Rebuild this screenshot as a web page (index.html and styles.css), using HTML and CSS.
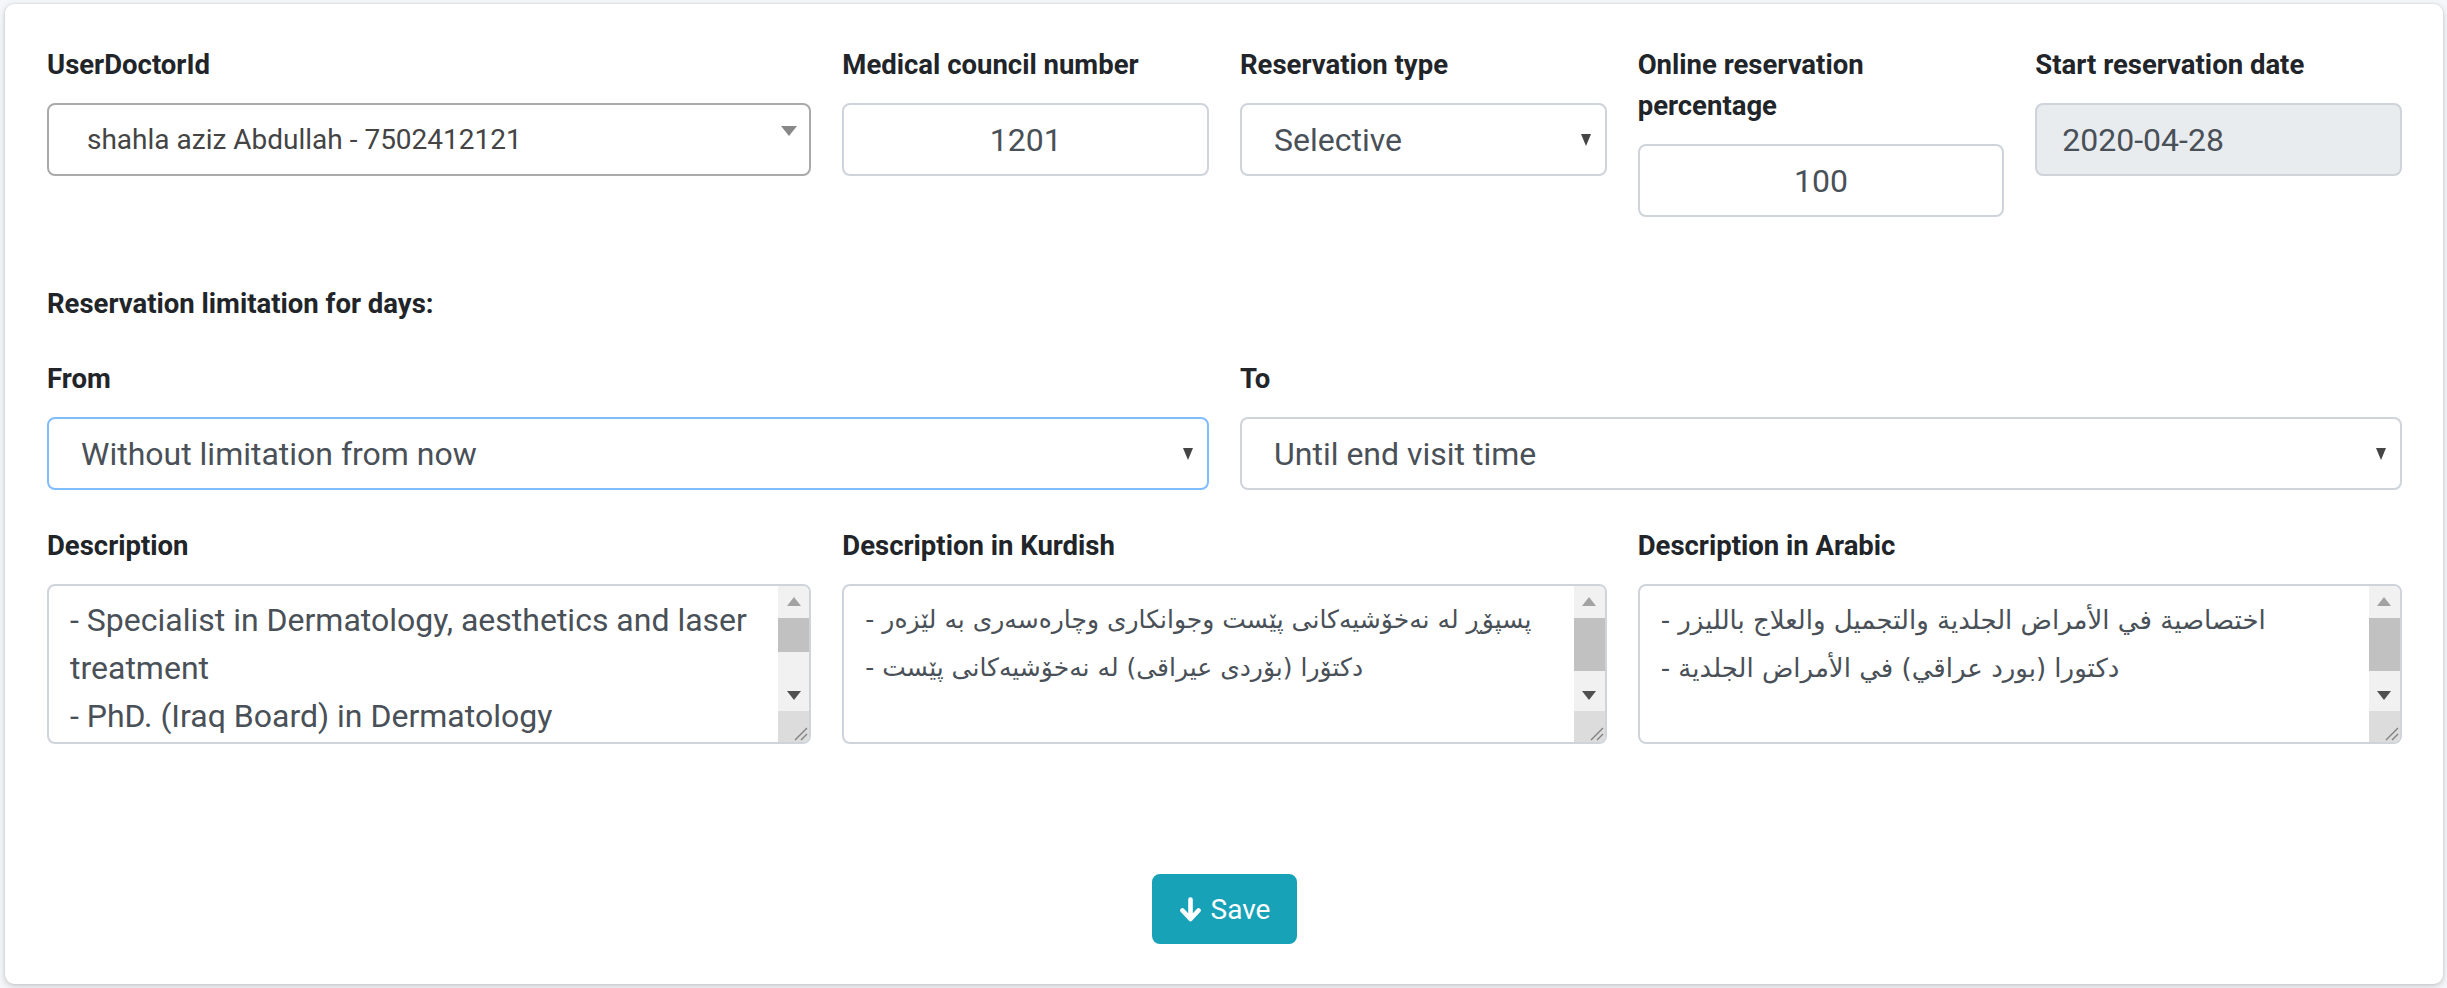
FILE: index.html
```html
<!DOCTYPE html>
<html lang="en">
<head>
<meta charset="utf-8">
<title>Doctor reservation settings</title>
<link rel="stylesheet" href="styles.css">
</head>
<body>
<div class="page">
  <div class="card">
    <div class="grid row-top">
      <div class="field span4">
        <label>UserDoctorId</label>
        <div class="select2">
          <span class="s2-text">shahla aziz Abdullah - 7502412121</span>
          <span class="s2-arrow"></span>
        </div>
      </div>
      <div class="field span2">
        <label>Medical council number</label>
        <input class="control center" type="text" value="1201">
      </div>
      <div class="field span2">
        <label>Reservation type</label>
        <select class="control select"><option>Selective</option></select>
      </div>
      <div class="field span2">
        <label class="label-narrow">Online reservation percentage</label>
        <input class="control center" type="text" value="100">
      </div>
      <div class="field span2">
        <label>Start reservation date</label>
        <input class="control readonly" type="text" value="2020-04-28" readonly>
      </div>
    </div>

    <div class="section-label">Reservation limitation for days:</div>

    <div class="grid row-mid">
      <div class="field span6">
        <label>From</label>
        <select class="control select focus"><option>Without limitation from now</option></select>
      </div>
      <div class="field span6">
        <label>To</label>
        <select class="control select"><option>Until end visit time</option></select>
      </div>
    </div>

    <div class="grid row-desc">
      <div class="field span4">
        <label>Description</label>
        <div class="area-box">
          <textarea class="area-text">- Specialist in Dermatology, aesthetics and laser treatment
- PhD. (Iraq Board) in Dermatology
</textarea>
          <div class="vscroll">
            <span class="sb-btn sb-up"></span>
            <span class="sb-track"><span class="sb-thumb thumb-en"></span></span>
            <span class="sb-btn sb-down"></span>
            <span class="sb-corner"></span>
          </div>
        </div>
      </div>
      <div class="field span4">
        <label>Description in Kurdish</label>
        <div class="area-box">
          <textarea class="area-text area-ku">- پسپۆڕ له نه‌خۆشیه‌کانی پێست وجوانکاری وچاره‌سه‌ری به لێزه‌ر
- دکتۆرا (بۆردی عیراقی) له نه‌خۆشیه‌کانی پێست
</textarea>
          <div class="vscroll">
            <span class="sb-btn sb-up"></span>
            <span class="sb-track"><span class="sb-thumb thumb-rtl"></span></span>
            <span class="sb-btn sb-down"></span>
            <span class="sb-corner"></span>
          </div>
        </div>
      </div>
      <div class="field span4">
        <label>Description in Arabic</label>
        <div class="area-box">
          <textarea class="area-text area-ar">- اختصاصية في الأمراض الجلدية والتجميل والعلاج بالليزر
- دكتورا (بورد عراقي) في الأمراض الجلدية
</textarea>
          <div class="vscroll">
            <span class="sb-btn sb-up"></span>
            <span class="sb-track"><span class="sb-thumb thumb-rtl"></span></span>
            <span class="sb-btn sb-down"></span>
            <span class="sb-corner"></span>
          </div>
        </div>
      </div>
    </div>

    <div class="actions">
      <button class="btn-save" type="button">
        <svg class="btn-icon" viewBox="0 0 23 25" width="23" height="25" aria-hidden="true">
          <path d="M11.5 2.5V22M3.5 13.5L11.5 22L19.5 13.5" fill="none" stroke="#fff" stroke-width="4.6" stroke-linecap="round" stroke-linejoin="round"/>
        </svg>
        <span>Save</span>
      </button>
    </div>
  </div>
</div>
</body>
</html>
```

FILE: styles.css
```css
* {
  box-sizing: border-box;
}

body {
  margin: 0;
  background: #f4f6f9;
  font-family: Roboto, "DejaVu Sans", sans-serif;
  color: #212529;
}

.page {
  padding: 4px 4px 4px 5px;
}

.card {
  width: 2438px;
  height: 980px;
  background: #fff;
  border-radius: 9px;
  box-shadow: 0 0 2px rgba(0, 0, 0, 0.14), 0 2px 6px rgba(0, 0, 0, 0.18);
  padding: 40px 41px 40px 42px;
}

.grid {
  display: grid;
  grid-template-columns: repeat(12, minmax(0, 1fr));
  column-gap: 31px;
  align-items: start;
}

.span2 { grid-column: span 2; }
.span4 { grid-column: span 4; }
.span6 { grid-column: span 6; }

label,
.section-label {
  display: block;
  font-weight: 700;
  font-size: 27.5px;
  line-height: 41px;
  margin: 0 0 18px;
  color: #212529;
}

.label-narrow {
  max-width: 330px;
}

.section-label {
  margin-bottom: 34px;
}

.row-top {
  margin-bottom: 66px;
}

.row-mid {
  margin-bottom: 35px;
}

.control {
  display: block;
  width: 100%;
  height: 73px;
  margin: 0;
  border: 2px solid #ced4da;
  border-radius: 8px;
  background: #fff;
  font-family: Roboto, "DejaVu Sans", sans-serif;
  font-size: 32px;
  color: #495057;
  padding: 0 24px;
  outline: none;
}

.center {
  text-align: center;
}

.readonly {
  background: #e9ecef;
  padding-left: 25px;
}

select.control {
  -webkit-appearance: none;
  appearance: none;
  padding: 0 40px 0 32px;
  background: #fff url("data:image/svg+xml,%3Csvg xmlns='http://www.w3.org/2000/svg' viewBox='0 0 10 12'%3E%3Cpath d='M0 0H10L5 12Z' fill='%23454545'/%3E%3C/svg%3E") no-repeat right 14px center / 10px 12px;
}

.focus {
  border-color: #80bdff;
}

.select2 {
  position: relative;
  display: flex;
  align-items: center;
  height: 73px;
  border: 2px solid #aaa;
  border-radius: 8px;
  padding-left: 38px;
  font-size: 28px;
  color: #444;
}

.s2-arrow {
  position: absolute;
  right: 12px;
  top: 21px;
  width: 0;
  height: 0;
  border-style: solid;
  border-width: 10px 8px 0 8px;
  border-color: #888 transparent transparent transparent;
}

/* textarea with drawn classic scrollbar */
.area-box {
  display: flex;
  height: 160px;
  border: 2px solid #ced4da;
  border-radius: 8px;
  overflow: hidden;
  background: #fff;
}

.area-text {
  flex: 1;
  min-width: 0;
  height: 100%;
  margin: 0;
  border: 0;
  padding: 10px 21px;
  resize: none;
  overflow: hidden;
  outline: none;
  background: transparent;
  font-family: Roboto, "DejaVu Sans", sans-serif;
  font-size: 32px;
  line-height: 48px;
  color: #495057;
}

.area-ku {
  font-family: "DejaVu Sans", sans-serif;
  font-size: 25px;
}

.area-ar {
  font-family: "DejaVu Sans", sans-serif;
  font-size: 26px;
}

.vscroll {
  flex: none;
  width: 31px;
  display: flex;
  flex-direction: column;
  background: #f1f1f1;
}

.sb-btn {
  flex: none;
  height: 31px;
  background-repeat: no-repeat;
  background-position: center;
  background-size: 14px 9px;
}

.sb-up {
  background-image: url("data:image/svg+xml,%3Csvg xmlns='http://www.w3.org/2000/svg' viewBox='0 0 14 9'%3E%3Cpath d='M0 9H14L7 0Z' fill='%23a3a3a3'/%3E%3C/svg%3E");
}

.sb-down {
  background-image: url("data:image/svg+xml,%3Csvg xmlns='http://www.w3.org/2000/svg' viewBox='0 0 14 9'%3E%3Cpath d='M0 0H14L7 9Z' fill='%23505050'/%3E%3C/svg%3E");
}

.sb-track {
  flex: 1;
  padding-top: 1px;
}

.sb-thumb {
  display: block;
  background: #c1c1c1;
}

.thumb-en {
  height: 34px;
}

.thumb-rtl {
  height: 53px;
}

.sb-corner {
  flex: none;
  height: 31px;
  background: #dcdcdc url("data:image/svg+xml,%3Csvg xmlns='http://www.w3.org/2000/svg' viewBox='0 0 31 31'%3E%3Cpath d='M29 17L17 29M29 23L23 29' stroke='%23808080' stroke-width='1.4'/%3E%3C/svg%3E") no-repeat center / 31px 31px;
}

.actions {
  display: flex;
  justify-content: center;
  margin-top: 130px;
}

.btn-save {
  display: flex;
  align-items: center;
  gap: 9px;
  height: 70px;
  padding: 0 25px;
  background: #17a2b8;
  border: 2px solid #17a2b8;
  border-radius: 8px;
  color: #fff;
  font-family: Roboto, "DejaVu Sans", sans-serif;
  font-size: 28px;
  cursor: pointer;
}

.btn-icon {
  display: block;
  flex: none;
}
```
